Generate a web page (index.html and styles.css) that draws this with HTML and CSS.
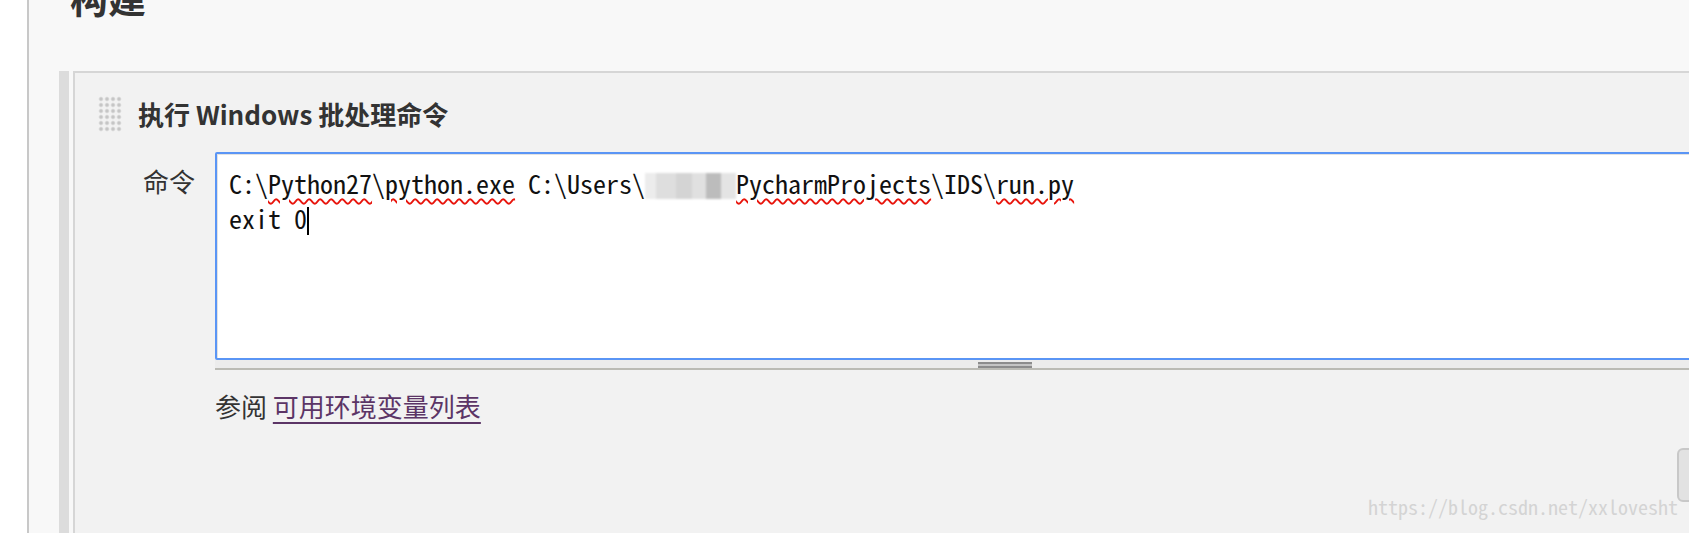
FILE: index.html
```html
<!DOCTYPE html>
<html lang="zh-CN">

<head>
    <meta charset="UTF-8">
    <meta name="viewport" content="width=device-width, initial-scale=1.0">
    <title>构建</title>
    <link rel="stylesheet" href="styles.css">
</head>

<body>
    <div class="page">
        <div class="gutter"></div>

        <div class="panel">
            <div class="section-title">构建</div>

            <div class="builder">
                <div class="drag-bar"></div>

                <div class="builder-box">
                    <div class="builder-head">
                        <span class="dd-handle"></span>
                        <span class="builder-name">执行 Windows 批处理命令</span>
                    </div>

                    <div class="field">
                        <div class="field-label">命令</div>
                        <div class="editor">
                            <div class="code">C:\<span class="typo">Python27</span>\<span class="typo">python.exe</span> C:\Users\<span class="mosaic"></span><span class="typo">PycharmProjects</span>\IDS\<span class="typo">run.py</span>
exit 0<span class="caret"></span></div>
                            <div class="resize-bar">
                                <span class="resize-grip"></span>
                            </div>
                        </div>
                    </div>

                    <div class="help">参阅 <a href="#" class="help-link">可用环境变量列表</a></div>

                    <div class="actions">
                        <button class="delete-btn">删除</button>
                    </div>
                </div>
            </div>
        </div>
    </div>

    <div class="watermark">https://blog.csdn.net/xxlovesht</div>
</body>

</html>
```

FILE: styles.css
```css
* {
    margin: 0;
    padding: 0;
    box-sizing: border-box;
}

html,
body {
    height: 100%;
    overflow: hidden;
}

body {
    background: #fff;
    font-family: "Noto Sans CJK SC", "Liberation Sans", sans-serif;
    color: #333;
    position: relative;
}

.page {
    display: flex;
    width: 1900px;
    min-height: 100%;
}

.gutter {
    width: 27px;
    flex-shrink: 0;
}

.panel {
    flex: 1;
    background: #f8f8f8;
    border-left: 2px solid #c8c8c8;
    padding-left: 30px;
}

.section-title {
    margin: -22px 0 0 11px;
    font-size: 38px;
    line-height: 38px;
    font-weight: 700;
    color: #333;
}

.builder {
    display: flex;
    margin-top: 55px;
    min-height: 500px;
}

.drag-bar {
    width: 10px;
    background: #dcdcdc;
    margin-right: 4px;
    flex-shrink: 0;
}

.builder-box {
    width: 1724px;
    background: #f2f2f2;
    border: 2px solid #d6d6d6;
    border-bottom: none;
    padding-top: 23px;
}

.builder-head {
    display: flex;
    align-items: center;
    height: 36px;
    padding-left: 23px;
    gap: 16px;
}

.dd-handle {
    width: 24px;
    height: 36px;
    background-image: radial-gradient(circle at 3px 3px, #bdbdbd 0, #cfcfcf 1.4px, #e9e9e9 2.3px, transparent 2.9px);
    background-size: 6px 6px;
}

.builder-name {
    font-size: 26px;
    line-height: 36px;
    font-weight: 700;
    color: #333;
}

.field {
    display: flex;
    margin-top: 20px;
}

.field-label {
    width: 140px;
    flex-shrink: 0;
    padding: 11px 20px 0 0;
    text-align: right;
    font-size: 26px;
    line-height: 35px;
    color: #333;
}

.editor {
    width: 1580px;
}

.code {
    height: 208px;
    background: #fff;
    border: 2px solid #5a95f5;
    border-radius: 2px;
    box-shadow: inset 1px 1px 0 #e2e2e2;
    padding: 11px 12px;
    font-family: "Noto Sans Mono CJK SC", "Liberation Mono", monospace;
    font-size: 26px;
    line-height: 35px;
    color: #111;
    white-space: pre;
}

.typo {
    text-decoration: underline wavy #e8140c;
    text-decoration-thickness: 1.5px;
    text-underline-offset: 4px;
}

.mosaic {
    display: inline-block;
    width: 91px;
    height: 26px;
    vertical-align: -5px;
    background: linear-gradient(90deg, #ececec 0 12%, #dedede 12% 34%, #d4d4d4 34% 52%, #e0e0e0 52% 67%, #bcbcbc 67% 84%, #e4e4e4 84% 100%);
    filter: blur(1px);
}

.caret {
    display: inline-block;
    width: 2px;
    height: 28px;
    background: #000;
    vertical-align: -6px;
}

.resize-bar {
    height: 10px;
    background: #ececec;
    border-bottom: 2px solid #bbbbb5;
    display: flex;
    justify-content: center;
    padding-top: 2px;
}

.resize-grip {
    width: 54px;
    height: 6px;
    background: #c4c4c4;
    border-top: 2px solid #8c8c8c;
    border-bottom: 2px solid #8c8c8c;
}

.help {
    margin-top: 18px;
    padding-left: 140px;
    font-size: 26px;
    line-height: 35px;
    color: #333;
}

.help-link {
    color: #5c3566;
    text-decoration: underline;
    text-underline-offset: 5px;
}

.actions {
    display: flex;
    justify-content: flex-end;
    margin-top: 25px;
}

.delete-btn {
    width: 118px;
    height: 54px;
    background: #e2e2e2;
    border: 2px solid #c8c8c8;
    border-radius: 6px;
    font-family: inherit;
    font-size: 26px;
    color: #333;
}

.watermark {
    position: absolute;
    left: 1368px;
    top: 493px;
    font-family: "Noto Sans Mono CJK SC", "Liberation Mono", monospace;
    font-size: 20px;
    line-height: 28px;
    color: #d4d4d4;
    white-space: nowrap;
}
```
